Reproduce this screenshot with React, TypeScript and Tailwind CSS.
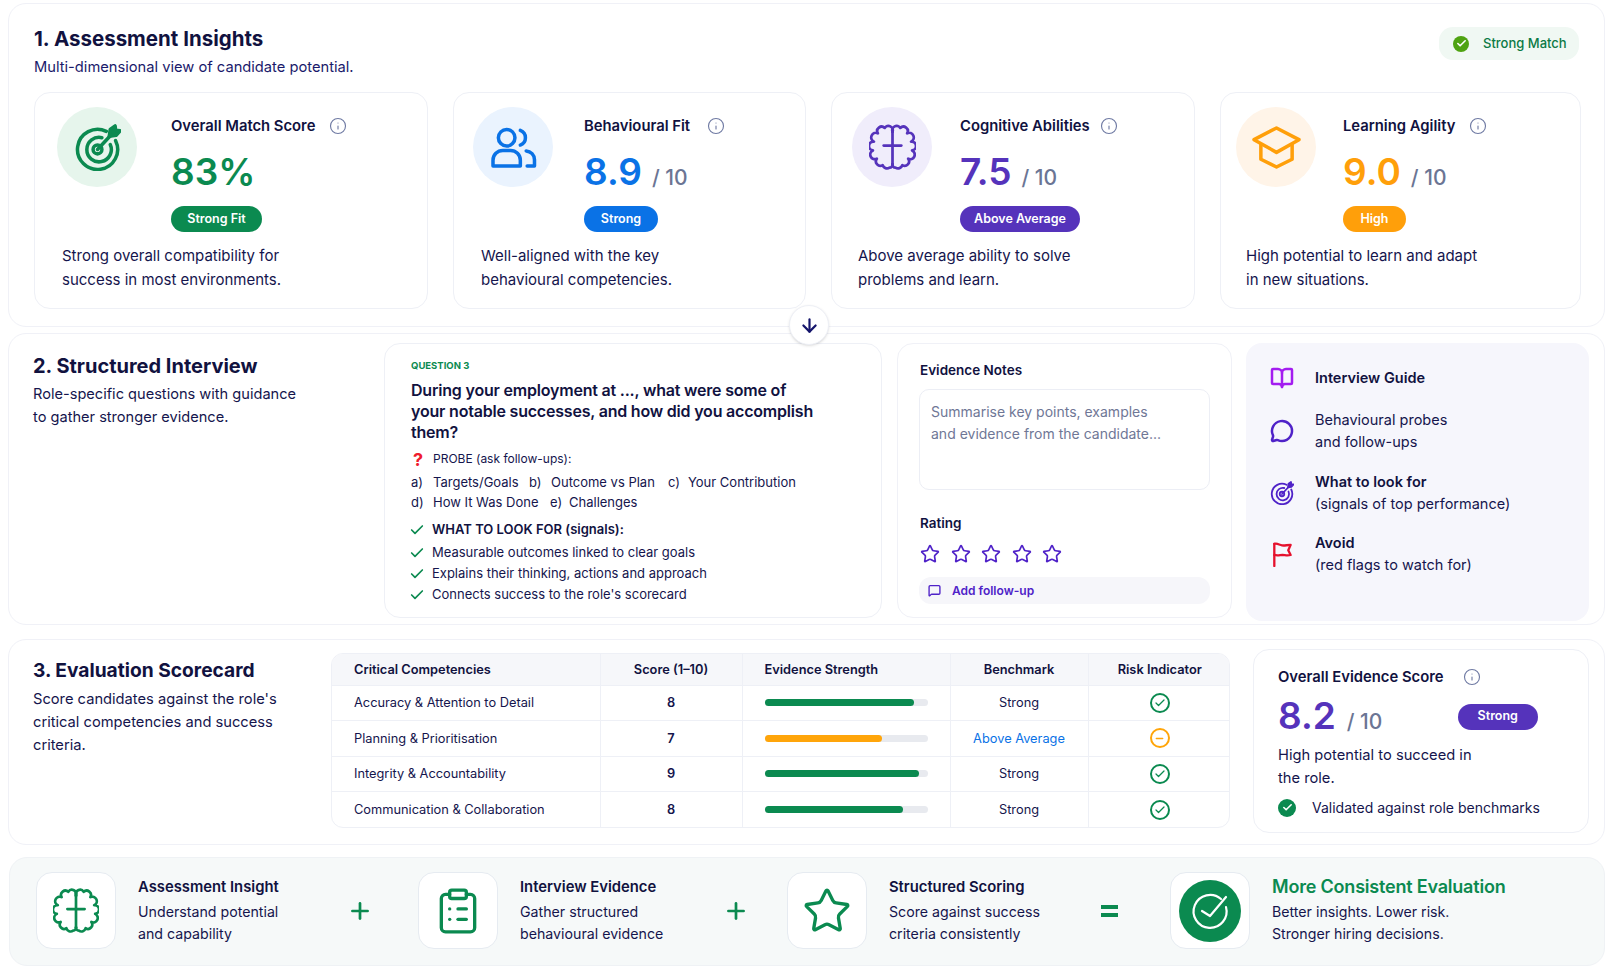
import { ArrowDown, BookOpen, Check, ClipboardList, Info, MessageCircle, MessageSquare, Minus, Plus, Star } from 'lucide-react';

function TargetIcon({ className }: { className: string }) {
  return (
    <svg viewBox="0 0 48 48" fill="none" stroke="currentColor" strokeWidth="3.6" strokeLinecap="round" strokeLinejoin="round" className={className}>
      <path d="M33 7.500A20.500 20.500 0 1 0 42.500 17" />
      <path d="M28.500 14A12.500 12.500 0 1 0 37 21" />
      <circle cx="24" cy="26" r="4.500" />
      <path d="M24 26L39 10" />
      <path d="M36 12.500L37 5.500L42 2L42.500 6.500L47 7L43 11.500Z" fill="currentColor" />
    </svg>
  );
}

function UsersIcon({ className }: { className: string }) {
  return (
    <svg viewBox="0 0 48 42" fill="none" stroke="currentColor" strokeWidth="3.6" strokeLinecap="round" strokeLinejoin="round" className={className}>
      <circle cx="17" cy="11" r="8.500" />
      <path d="M3 40V34a10 10 0 0 1 10-10h8a10 10 0 0 1 10 10v6Z" />
      <path d="M31 3.500a8 8 0 0 1 0 15" />
      <path d="M37 24.500a9 9 0 0 1 8.500 9V40H38" />
    </svg>
  );
}

function BrainIcon({ className }: { className: string }) {
  return (
    <svg viewBox="0 0 48 48" fill="none" stroke="currentColor" strokeWidth="2.8" strokeLinecap="round" strokeLinejoin="round" className={className}>
      <path d="M24 8A4.500 4.500 0 0 1 32 4A4.500 4.500 0 0 1 39 9.500A4.500 4.500 0 0 1 43 18A4.500 4.500 0 0 1 44 27A4.500 4.500 0 0 1 40 35.500A4.500 4.500 0 0 1 34 42A4.500 4.500 0 0 1 27 44.500A3 3 0 0 1 24 41" />
      <path d="M24 8A4.500 4.500 0 0 0 16 4A4.500 4.500 0 0 0 9 9.500A4.500 4.500 0 0 0 5 18A4.500 4.500 0 0 0 4 27A4.500 4.500 0 0 0 8 35.500A4.500 4.500 0 0 0 14 42A4.500 4.500 0 0 0 21 44.500A3 3 0 0 0 24 41" />
      <path d="M24 8V41" />
      <path d="M15 22H33" />
    </svg>
  );
}

function CapIcon({ className }: { className: string }) {
  return (
    <svg viewBox="0 0 50 44" fill="none" stroke="currentColor" strokeWidth="3.600" strokeLinecap="round" strokeLinejoin="round" className={className}>
      <path d="M25 2L48 14L25 27L2 14Z" />
      <path d="M9 19V34L25 42L41 34V19" />
    </svg>
  );
}

function FlagIcon({ className }: { className: string }) {
  return (
    <svg viewBox="0 0 24 26" fill="none" stroke="currentColor" strokeWidth="2.400" strokeLinecap="round" strokeLinejoin="round" className={className}>
      <path d="M4 25V2" />
      <path d="M4 2c3-1 5 1 8 1.500s5-.5 9-.5l-2.500 5.500 2.500 5c-3.500 1-6 0-8.500 0s-5 1-8.500 0" />
    </svg>
  );
}

function CheckBadge({ className }: { className: string }) {
  return (
    <span className={`flex items-center justify-center rounded-full text-white ${className}`}>
      <Check className="h-[11px] w-[11px]" strokeWidth={3.5} />
    </span>
  );
}

const cards = [
  { title: 'Overall Match Score', value: '83%', suffix: '', badge: 'Strong Fit', lines: ['Strong overall compatibility for', 'success in most environments.'], top: 'pl-[22px] gap-[34px]', desc: 'pl-[27px]', circle: 'bg-[#e6f5ec]', color: 'text-[#0b8a50]', pill: 'bg-[#0b8a50] w-[91px]', labelGap: 'gap-[14px]', icon: <TargetIcon className="h-[47px] w-[47px] text-[#0b8a50]" /> },
  { title: 'Behavioural Fit', value: '8.9', suffix: '/ 10', badge: 'Strong', lines: ['Well-aligned with the key', 'behavioural competencies.'], top: 'pl-[19px] gap-[31px]', desc: 'pl-[27px]', circle: 'bg-[#eaf3fe]', color: 'text-[#0a72e6]', pill: 'bg-[#0a72e6] w-[74px]', labelGap: 'gap-[17px]', icon: <UsersIcon className="h-[41px] w-[47px] text-[#0a72e6]" /> },
  { title: 'Cognitive Abilities', value: '7.5', suffix: '/ 10', badge: 'Above Average', lines: ['Above average ability to solve', 'problems and learn.'], top: 'pl-[20px] gap-[28px]', desc: 'pl-[26px]', circle: 'bg-[#f0edfb]', color: 'text-[#5533bb]', pill: 'bg-[#5533bb] w-[120px]', labelGap: 'gap-[10px]', icon: <BrainIcon className="h-[47px] w-[47px] text-[#5533bb]" /> },
  { title: 'Learning Agility', value: '9.0', suffix: '/ 10', badge: 'High', lines: ['High potential to learn and adapt', 'in new situations.'], top: 'pl-[15px] gap-[27px]', desc: 'pl-[25px]', circle: 'bg-[#fff4e8]', color: 'text-[#ff9f0a]', pill: 'bg-[#ff9f0a] w-[63px]', labelGap: 'gap-[14px]', icon: <CapIcon className="h-[43px] w-[49px] text-[#ff9f0a]" /> },
];

const signals = ['Measurable outcomes linked to clear goals', 'Explains their thinking, actions and approach', "Connects success to the role's scorecard"];

const rows = [
  { name: 'Accuracy & Attention to Detail', score: 8, bar: 'w-[92%] bg-[#0b8a50]', bench: 'Strong', ok: true },
  { name: 'Planning & Prioritisation', score: 7, bar: 'w-[72%] bg-[#ffa50a]', bench: 'Above Average', ok: false },
  { name: 'Integrity & Accountability', score: 9, bar: 'w-[95%] bg-[#0b8a50]', bench: 'Strong', ok: true },
  { name: 'Communication & Collaboration', score: 8, bar: 'w-[85%] bg-[#0b8a50]', bench: 'Strong', ok: true },
];

function Step({ width, icon, title, lines, titleClass }: { width: string; icon: React.ReactNode; title: string; lines: string[]; titleClass?: string }) {
  return (
    <div className={`flex items-center gap-[22px] ${width}`}>
      <div className="flex h-[77px] w-[80px] shrink-0 items-center justify-center rounded-[16px] border border-[#e6ebf1] bg-white">{icon}</div>
      <div className="text-[14.200px] leading-[22px] text-[#15154d]">
        <div className={titleClass ?? 'mb-[3px] text-[14.800px] font-semibold text-[#11123f]'}>{title}</div>
        {lines.map(l => <div key={l}>{l}</div>)}
      </div>
    </div>
  );
}

export default function App() {
  return (
    <div className="relative flex h-[976px] flex-col bg-white pl-[8px] pr-[6px] pt-[3px] font-['Inter',sans-serif] text-[#11123f]">
      {/* Assessment Insights */}
      <section className="h-[324px] rounded-[18px] border border-[#f0f1f7] px-[25px] pt-[20px]">
        <div className="flex h-[68px] items-start justify-between">
          <div>
            <h2 className="mt-[1px] text-[20.500px] font-bold leading-[28px]">1. Assessment Insights</h2>
            <p className="text-[14.700px] leading-[28px] text-[#1a1a6b]">Multi-dimensional view of candidate potential.</p>
          </div>
          <div className="mt-[3px] flex h-[33px] w-[140px] items-center gap-[14px] rounded-[14px] bg-[#f0f8f3] pl-[14px] text-[13px] font-medium text-[#0b7a45]">
            <CheckBadge className="h-[16px] w-[16px] bg-[#4fa312]" />
            Strong Match
          </div>
        </div>
        <div className="grid grid-cols-[394px_353px_364px_361px] gap-[25px]">
          {cards.map(c => (
            <div key={c.title} className="h-[217px] rounded-[16px] border border-[#eef0f6] bg-white pt-[14px]">
              <div className={`flex ${c.top}`}>
                <div className={`flex h-[80px] w-[80px] shrink-0 items-center justify-center rounded-full ${c.circle}`}>{c.icon}</div>
                <div className="pt-[10px]">
                  <div className={`flex h-[18px] items-center text-[14.800px] font-semibold ${c.labelGap}`}>
                    {c.title}
                    <Info className="h-[18px] w-[18px] text-[#6f7aa3]" strokeWidth={1.5} />
                  </div>
                  <div className="mt-[14px] flex h-[46px] items-center">
                    <span className={`text-[37px] font-semibold leading-[46px] ${c.color}`}>{c.value}</span>
                    {c.suffix && <span className="ml-[10px] mt-[12px] text-[21px] font-medium text-[#6b7594]">{c.suffix}</span>}
                  </div>
                  <div className={`mt-[11px] flex h-[26px] items-center justify-center rounded-full text-[12.500px] font-semibold text-white ${c.pill}`}>{c.badge}</div>
                </div>
              </div>
              <div className={`mt-[12px] text-[15px] leading-[24px] text-[#15154d] ${c.desc}`}>
                {c.lines.map(l => <div key={l}>{l}</div>)}
              </div>
            </div>
          ))}
        </div>
      </section>

      {/* Structured Interview */}
      <section className="mt-[6px] flex h-[292px] rounded-[18px] border border-[#f0f1f7] pb-[6px] pt-[9px]">
        <div className="w-[375px] shrink-0 pl-[24px] pt-[9px]">
          <h2 className="text-[20px] font-bold leading-[28px]">2. Structured Interview</h2>
          <p className="mt-[3px] text-[14.600px] leading-[23px] text-[#15154d]">Role-specific questions with guidance<br />to gather stronger evidence.</p>
        </div>
        <div className="w-[498px] shrink-0 rounded-[16px] border border-[#eef0f6] bg-white pl-[26px] pt-[15px] text-[13px] text-[#15154d]">
          <div className="text-[9.500px] font-bold leading-[14px] text-[#0b8a50]">QUESTION 3</div>
          <div className="mt-[7px] text-[16px] font-semibold leading-[21px] tracking-[-0.2px] text-[#11123f]">During your employment at ..., what were some of<br />your notable successes, and how did you accomplish<br />them?</div>
          <div className="mt-[6px] flex h-[20px] items-center text-[12px]"><span className="w-[22px] pl-[2px] text-[18px] font-bold text-[#ef1c2e]">?</span>PROBE (ask follow-ups):</div>
          <div className="mt-[3px] flex h-[21px] items-center">
            <span className="w-[22px]">a)</span><span className="w-[96px]">Targets/Goals</span>
            <span className="w-[22px]">b)</span><span className="w-[117px]">Outcome vs Plan</span>
            <span className="w-[20px]">c)</span><span>Your Contribution</span>
          </div>
          <div className="flex h-[20px] items-center">
            <span className="w-[22px]">d)</span><span className="w-[117px]">How It Was Done</span>
            <span className="w-[19px]">e)</span><span>Challenges</span>
          </div>
          <div className="mt-[6px] flex h-[21px] items-center font-semibold text-[#11123f]"><Check className="-ml-[2px] mr-[7px] h-[16px] w-[16px] text-[#0b8a50]" strokeWidth={2.5} />WHAT TO LOOK FOR (signals):</div>
          {signals.map((s, i) => (
            <div key={s} className={`flex h-[21px] items-center ${i === 0 ? 'mt-[2px]' : ''}`}><Check className="-ml-[2px] mr-[7px] h-[16px] w-[16px] text-[#0b8a50]" strokeWidth={2.5} />{s}</div>
          ))}
        </div>
        <div className="ml-[15px] w-[335px] shrink-0 rounded-[16px] border border-[#f0f1f7] bg-white pl-[22px] pr-[21px] pt-[16px]">
          <div className="text-[13.500px] font-semibold leading-[20px]">Evidence Notes</div>
          <div className="-ml-[1px] mt-[9px] h-[101px] rounded-[10px] border border-[#eceef5] px-[11px] pt-[11px] text-[14px] leading-[22px] text-[#6f7796]">Summarise key points, examples<br />and evidence from the candidate...</div>
          <div className="mt-[23px] text-[13.500px] font-semibold leading-[20px]">Rating</div>
          <div className="mt-[11px] flex h-[20px] gap-[10.500px]">
            {[1, 2, 3, 4, 5].map(n => <Star key={n} className="h-[20px] w-[20px] text-[#4f22c8]" strokeWidth={2} />)}
          </div>
          <div className="-ml-[1px] mt-[13px] flex h-[27px] items-center gap-[11px] rounded-[12px] bg-[#f6f6fa] pl-[9px] text-[12px] font-semibold text-[#4f22c8]">
            <MessageSquare className="h-[13px] w-[13px]" strokeWidth={2.5} />Add follow-up
          </div>
        </div>
        <div className="ml-[14px] h-[278px] w-[343px] shrink-0 rounded-[16px] bg-[#f6f6fc] pl-[24px] pt-[23px] text-[14.500px] leading-[22px] text-[#15154d]">
          <div className="flex h-[24px] items-center gap-[21px] font-semibold text-[#11123f]"><BookOpen className="h-[24px] w-[24px] text-[#a31cf0]" strokeWidth={2.5} />Interview Guide</div>
          <div className="mt-[19px] flex items-center gap-[21px]"><MessageCircle className="h-[24px] w-[24px] text-[#4f22c8]" strokeWidth={2.5} /><div>Behavioural probes<br />and follow-ups</div></div>
          <div className="mt-[18px] flex items-center gap-[21px]"><TargetIcon className="h-[24px] w-[24px] text-[#4f22c8]" /><div><span className="font-semibold text-[#11123f]">What to look for</span><br />(signals of top performance)</div></div>
          <div className="mt-[17px] flex items-center gap-[21px]"><FlagIcon className="h-[25px] w-[24px] text-[#e5112d]" /><div><span className="font-semibold text-[#11123f]">Avoid</span><br />(red flags to watch for)</div></div>
        </div>
      </section>

      {/* Evaluation Scorecard */}
      <section className="mt-[14px] flex h-[206px] rounded-[18px] border border-[#f0f1f7] pt-[9px]">
        <div className="w-[322px] shrink-0 pl-[24px] pt-[7px]">
          <h2 className="text-[19.200px] font-bold leading-[28px]">3. Evaluation Scorecard</h2>
          <p className="mt-[4px] text-[14.700px] leading-[22.800px] text-[#15154d]">Score candidates against the role's<br />critical competencies and success<br />criteria.</p>
        </div>
        <div className="mt-[4px] h-[175px] w-[899px] shrink-0 overflow-hidden rounded-[12px] border border-[#eef0f6] text-[12.800px]">
          <table className="w-full table-fixed border-collapse text-[#15154d]">
            <colgroup>
              <col className="w-[268px]" /><col className="w-[142px]" /><col className="w-[208px]" /><col className="w-[138px]" /><col className="w-[143px]" />
            </colgroup>
            <thead>
              <tr className="h-[31px] bg-[#f6f7fa] text-[12.800px] font-semibold text-[#11123f]">
                <th className="pl-[22px] text-left font-semibold">Critical Competencies</th>
                <th className="border-l border-[#eef0f6] font-semibold">Score (1–10)</th>
                <th className="border-l border-[#eef0f6] pl-[22px] text-left font-semibold">Evidence Strength</th>
                <th className="border-l border-[#eef0f6] font-semibold">Benchmark</th>
                <th className="border-l border-[#eef0f6] font-semibold">Risk Indicator</th>
              </tr>
            </thead>
            <tbody>
              {rows.map(r => (
                <tr key={r.name} className="h-[35.500px] border-t border-[#eef0f6]">
                  <td className="pl-[22px]">{r.name}</td>
                  <td className="border-l border-[#eef0f6] text-center font-semibold">{r.score}</td>
                  <td className="border-l border-[#eef0f6] pl-[22px]">
                    <div className="h-[7px] w-[163px] rounded-full bg-[#e8eaef]"><div className={`h-full rounded-full ${r.bar}`} /></div>
                  </td>
                  <td className={`border-l border-[#eef0f6] text-center ${r.ok ? '' : 'text-[#0a72e6]'}`}>{r.bench}</td>
                  <td className="border-l border-[#eef0f6]">
                    <div className={`mx-auto flex h-[20px] w-[20px] items-center justify-center rounded-full border-2 ${r.ok ? 'border-[#0b8a50] text-[#0b8a50]' : 'border-[#ffa50a] text-[#ffa50a]'}`}>
                      {r.ok ? <Check className="h-[12px] w-[12px]" strokeWidth={2.5} /> : <Minus className="h-[11px] w-[11px]" strokeWidth={3} />}
                    </div>
                  </td>
                </tr>
              ))}
            </tbody>
          </table>
        </div>
        <div className="ml-[23px] h-[184px] w-[336px] shrink-0 rounded-[16px] border border-[#eef0f6] bg-white pl-[24px] pt-[17px]">
          <div className="flex h-[20px] items-center gap-[20px] text-[14.800px] font-semibold">Overall Evidence Score<Info className="h-[18px] w-[18px] text-[#6f7aa3]" strokeWidth={1.5} /></div>
          <div className="mt-[7px] flex h-[44px] items-center">
            <span className="text-[37px] font-semibold text-[#5533bb]">8.2</span>
            <span className="ml-[11px] mt-[12px] w-[111px] text-[21px] font-medium text-[#6b7594]">/ 10</span>
            <span className="mt-[1px] flex h-[26px] w-[80px] items-center justify-center rounded-full bg-[#5533bb] text-[12.500px] font-semibold text-white">Strong</span>
          </div>
          <div className="mt-[6px] text-[14.700px] leading-[22.500px] text-[#15154d]">High potential to succeed in<br />the role.</div>
          <div className="mt-[8px] flex items-center gap-[16px] text-[14px] text-[#15154d]"><CheckBadge className="h-[18px] w-[18px] bg-[#0b8a50]" />Validated against role benchmarks</div>
        </div>
      </section>

      {/* Summary strip */}
      <section className="ml-[1px] mt-[12px] flex h-[109px] items-center rounded-[18px] border border-[#eff2f5] bg-[#f6f9f9] pb-[2px] pl-[26px] text-[#0b8a50]">
        <Step width="w-[311px]" icon={<BrainIcon className="h-[46px] w-[46px] text-[#0b8a50]" />} title="Assessment Insight" lines={['Understand potential', 'and capability']} />
        <Plus className="mr-[45px] h-[26px] w-[26px]" strokeWidth={2.5} />
        <Step width="w-[305px]" icon={<ClipboardList className="h-[50px] w-[50px] text-[#0b8a50]" strokeWidth={1.6} />} title="Interview Evidence" lines={['Gather structured', 'behavioural evidence']} />
        <Plus className="mr-[38px] h-[26px] w-[26px]" strokeWidth={2.5} />
        <Step width="w-[309px]" icon={<Star className="h-[50px] w-[50px] text-[#0b8a50]" strokeWidth={1.6} />} title="Structured Scoring" lines={['Score against success', 'criteria consistently']} />
        <div className="mr-[48px] flex h-[26px] w-[26px] flex-col items-center justify-center gap-[4px]"><span className="h-[4px] w-[17px] bg-[#0b8a50]" /><span className="h-[4px] w-[17px] bg-[#0b8a50]" /></div>
        <Step
          width="w-[400px]"
          icon={
            <span className="flex h-[62px] w-[62px] items-center justify-center rounded-full bg-[#0b8a50]">
              <svg viewBox="0 0 40 40" fill="none" stroke="white" strokeWidth="2.200" strokeLinecap="round" strokeLinejoin="round" className="h-[40px] w-[40px]">
                <path d="M31 8A16.500 16.500 0 1 0 36 16" />
                <path d="M12 20L20 25L36 6" />
              </svg>
            </span>
          }
          title="More Consistent Evaluation"
          titleClass="mb-[3px] text-[18px] font-semibold tracking-[-0.2px] text-[#0b8a50]"
          lines={['Better insights. Lower risk.', 'Stronger hiring decisions.']}
        />
      </section>

      <button className="absolute left-[789px] top-[305px] flex h-[40px] w-[40px] items-center justify-center rounded-full border border-[#eef0f6] bg-white text-[#14146b] shadow-sm">
        <ArrowDown className="h-[21px] w-[21px]" strokeWidth={2.5} />
      </button>
    </div>
  );
}
